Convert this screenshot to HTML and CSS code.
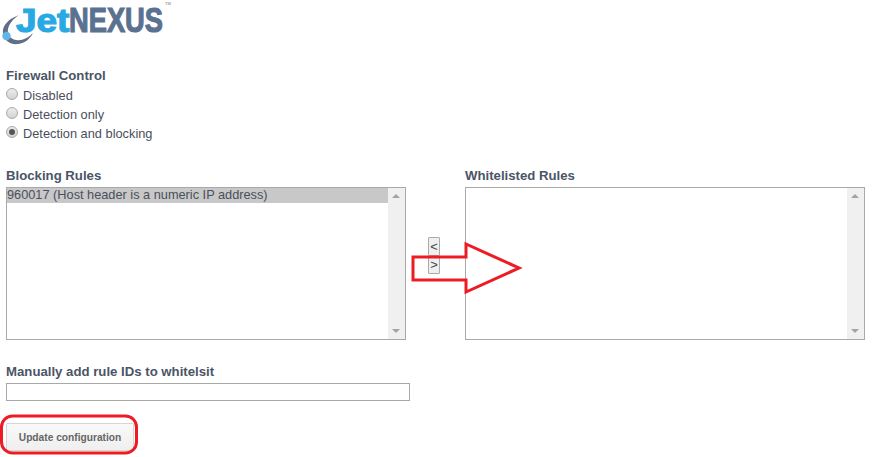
FILE: index.html
```html
<!DOCTYPE html>
<html lang="en">
<head>
    <meta charset="UTF-8">
    <meta name="viewport" content="width=device-width, initial-scale=1.0">
    <title>Firewall</title>
    <link rel="stylesheet" href="styles.css">
</head>
<body>
    <div class="logo">
        <svg width="175" height="46" viewBox="0 0 175 46">
            <path d="M19 15 C8 19 2 26 3 33 C4 41 11 45 18 44 C25 43 30 39 33 33 C28 38 22 41 16 40 C10 39 7 34 8 29 C9 24 13 19 19 15 Z" fill="#5f6f86"/>
            <circle cx="6.5" cy="36" r="4.2" fill="#62b5e8"/>
            <text transform="translate(16 31.5) scale(1.12 1)" class="logo-jet">Jet</text>
            <text transform="translate(69 31.7) scale(0.78 1)" class="logo-nexus">NEXUS</text>
            <text x="165" y="5" class="logo-tm">TM</text>
        </svg>
    </div>

    <h4 class="title">Firewall Control</h4>
    <div class="radios">
        <label class="radio-row"><span class="radio"></span>Disabled</label>
        <label class="radio-row"><span class="radio"></span>Detection only</label>
        <label class="radio-row"><span class="radio checked"></span>Detection and blocking</label>
    </div>

    <div class="rules">
        <div class="rule-col">
            <h4 class="rule-title">Blocking Rules</h4>
            <div class="listbox">
                <div class="list-items">
                    <div class="list-item">960017 (Host header is a numeric IP address)</div>
                </div>
                <div class="scroll"><span class="up"></span><span class="down"></span></div>
            </div>
        </div>
        <div class="move-btns">
            <button class="move">&lt;</button>
            <button class="move">&gt;</button>
        </div>
        <div class="rule-col">
            <h4 class="rule-title">Whitelisted Rules</h4>
            <div class="listbox">
                <div class="list-items"></div>
                <div class="scroll"><span class="up"></span><span class="down"></span></div>
            </div>
        </div>
    </div>

    <h4 class="manual-title">Manually add rule IDs to whitelsit</h4>
    <input class="manual-input" type="text">
    <button class="update">Update configuration</button>

    <!-- red marks drawn over the screenshot -->
    <svg class="marks" width="875" height="457" viewBox="0 0 875 457">
        <path d="M413 257 H466 V244 L519 268 L466 292 V280 H413 Z" fill="none" stroke="#ed1c24" stroke-width="3"/>
        <rect x="1.5" y="416" width="135" height="37" rx="11" fill="none" stroke="#ed1c24" stroke-width="3"/>
    </svg>
</body>
</html>
```

FILE: styles.css
```css
body {
    margin: 0;
    padding: 0 6px;
    font-family: "Liberation Sans", Arial, sans-serif;
    font-size: 12.8px;
    color: #4a4f5c;
    background-color: #fff;
}
.logo {
    height: 67px;
    margin-left: -6px;
}
.logo svg {
    display: block;
}
.logo-jet {
    font-family: "Liberation Sans", sans-serif;
    font-weight: bold;
    font-size: 33px;
    fill: #29a9e3;
    stroke: #29a9e3;
    stroke-width: 1.2px;
}
.logo-nexus {
    font-family: "Liberation Sans", sans-serif;
    font-weight: bold;
    font-size: 35px;
    fill: #5a7190;
    stroke: #5a7190;
    stroke-width: 1.2px;
}
.logo-tm {
    font-size: 4px;
    fill: #777;
}
h4 {
    margin: 0;
    font-size: 13.2px;
    color: #4a5566;
}
.title {
    line-height: 17px;
}
.radios {
    display: flex;
    flex-direction: column;
    height: 57px;
    margin-top: 2px;
}
.radio-row {
    display: flex;
    align-items: center;
    height: 19px;
    gap: 5px;
}
.radio {
    width: 10px;
    height: 10px;
    border: 1px solid #a9a9a9;
    border-radius: 50%;
    background: linear-gradient(#ededed, #d2d2d2);
    margin-top: -4px;
    display: flex;
    align-items: center;
    justify-content: center;
}
.radio.checked::after {
    content: "";
    width: 6px;
    height: 6px;
    border-radius: 50%;
    background-color: #555;
}
.rules {
    display: flex;
    margin-top: 23px;
}
.rule-col {
    width: 400px;
}
.rule-title {
    line-height: 17px;
    padding-top: 1px;
    margin-bottom: 3px;
}
.listbox {
    display: flex;
    box-sizing: border-box;
    height: 153px;
    border: 1px solid #a9a9a9;
}
.list-items {
    flex: 1;
}
.list-item {
    height: 15px;
    line-height: 14px;
    font-size: 12.75px;
    background-color: #c8c8c8;
}
.scroll {
    position: relative;
    width: 17px;
    background-color: #f0f0f0;
}
.up, .down {
    position: absolute;
    left: 4px;
    border-left: 4px solid transparent;
    border-right: 4px solid transparent;
}
.up {
    top: 6px;
    border-bottom: 4px solid #a3a3a3;
}
.down {
    bottom: 6px;
    border-top: 4px solid #a3a3a3;
}
.move-btns {
    display: flex;
    flex-direction: column;
    width: 59px;
    padding: 71px 0 0 22px;
    box-sizing: border-box;
}
.move {
    box-sizing: border-box;
    width: 12px;
    height: 18.5px;
    padding: 0;
    font-family: inherit;
    font-size: 13px;
    color: #444;
    border: 1px solid #aaa;
    border-radius: 1px;
    background-color: #efefef;
}
.manual-title {
    margin-top: 23px;
    line-height: 17px;
}
.manual-input {
    display: block;
    box-sizing: border-box;
    width: 404px;
    height: 18px;
    margin: 3px 0 22px;
    padding: 0;
    border: 1px solid #a9a9a9;
}
.update {
    display: block;
    box-sizing: border-box;
    width: 128px;
    height: 28px;
    padding: 0;
    font-family: inherit;
    font-size: 10.2px;
    font-weight: bold;
    color: #666;
    border: 1px solid #d6d6d6;
    border-radius: 1px;
    background: linear-gradient(#f9f9f9, #efefef);
}
.marks {
    position: absolute;
    left: 0;
    top: 0;
    pointer-events: none;
}
```
